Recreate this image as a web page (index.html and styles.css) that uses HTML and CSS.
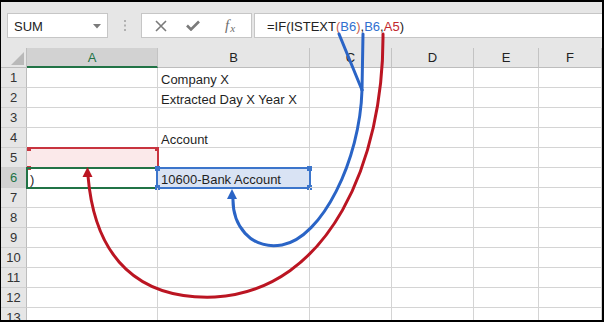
FILE: index.html
```html
<!DOCTYPE html>
<html>
<head>
<meta charset="utf-8">
<link rel="stylesheet" href="styles.css">
</head>
<body>
<div class="frame">
  <div class="toolbar">
    <div class="namebox">
      <span>SUM</span>
      <svg class="caret" width="8" height="5" viewBox="0 0 8 5"><path d="M0 0 H8 L4 4.5 Z" fill="#7a7a7a"/></svg>
    </div>
    <div class="sep">
      <svg width="3" height="11" viewBox="0 0 3 11"><rect x="0" y="0" width="2" height="2" fill="#b0b0b0"/><rect x="0" y="4.5" width="2" height="2" fill="#b0b0b0"/><rect x="0" y="9" width="2" height="2" fill="#b0b0b0"/></svg>
    </div>
    <div class="fbtns">
      <span class="fb fb-x"><svg width="12" height="12" viewBox="0 0 12 12"><path d="M1 1 L11 11 M11 1 L1 11" stroke="#7a7a7a" stroke-width="1.6" fill="none"/></svg></span>
      <span class="fb fb-ok"><svg width="14" height="11" viewBox="0 0 14 11"><path d="M1 5.5 L5 9.5 L13 1.5" stroke="#7a7a7a" stroke-width="2.6" fill="none"/></svg></span>
      <span class="fb fb-fx"><i>f</i><span class="fx-x">x</span></span>
    </div>
    <div class="finput">=IF(ISTEXT<span class="par">(</span><span class="rb">B6</span><span class="par">)</span>,<span class="rb">B6</span>,<span class="rr">A5</span>)</div>
  </div>
  <div class="sheet">
    <div class="corner"><svg width="13" height="13" viewBox="0 0 13 13"><path d="M13 0 V13 H0 Z" fill="#b9b9b9"/></svg></div>
    <div class="ch act">A</div><div class="ch">B</div><div class="ch">C</div><div class="ch">D</div><div class="ch">E</div><div class="ch">F</div>

    <div class="rh">1</div><div class="c"></div><div class="c">Company X</div><div class="c"></div><div class="c"></div><div class="c"></div><div class="c"></div>
    <div class="rh">2</div><div class="c"></div><div class="c">Extracted Day X Year X</div><div class="c"></div><div class="c"></div><div class="c"></div><div class="c"></div>
    <div class="rh">3</div><div class="c"></div><div class="c"></div><div class="c"></div><div class="c"></div><div class="c"></div><div class="c"></div>
    <div class="rh">4</div><div class="c"></div><div class="c">Account</div><div class="c"></div><div class="c"></div><div class="c"></div><div class="c"></div>
    <div class="rh">5</div><div class="c ref-red"><span class="box box-red"><span class="h h-tl"></span><span class="h h-tr"></span><span class="h h-bl"></span><span class="h h-br"></span></span></div><div class="c"></div><div class="c"></div><div class="c"></div><div class="c"></div><div class="c"></div>
    <div class="rh act">6</div><div class="c active">)<span class="box box-green"></span></div><div class="c ref-blue">10600-Bank Account<span class="box box-blue"><span class="h h-tl"></span><span class="h h-tr"></span><span class="h h-bl"></span><span class="h h-br"></span></span></div><div class="c"></div><div class="c"></div><div class="c"></div><div class="c"></div>
    <div class="rh">7</div><div class="c"></div><div class="c"></div><div class="c"></div><div class="c"></div><div class="c"></div><div class="c"></div>
    <div class="rh">8</div><div class="c"></div><div class="c"></div><div class="c"></div><div class="c"></div><div class="c"></div><div class="c"></div>
    <div class="rh">9</div><div class="c"></div><div class="c"></div><div class="c"></div><div class="c"></div><div class="c"></div><div class="c"></div>
    <div class="rh">10</div><div class="c"></div><div class="c"></div><div class="c"></div><div class="c"></div><div class="c"></div><div class="c"></div>
    <div class="rh">11</div><div class="c"></div><div class="c"></div><div class="c"></div><div class="c"></div><div class="c"></div><div class="c"></div>
    <div class="rh">12</div><div class="c"></div><div class="c"></div><div class="c"></div><div class="c"></div><div class="c"></div><div class="c"></div>
    <div class="rh">13</div><div class="c"></div><div class="c"></div><div class="c"></div><div class="c"></div><div class="c"></div><div class="c"></div>
  </div>
  <svg class="arrows" width="604" height="322" viewBox="0 0 604 322">
    <g fill="none" stroke-width="3" stroke-linecap="round">
      <path d="M339 34 L362 90" stroke="#2a64c6"/>
      <path d="M363 34 L362 90" stroke="#2a64c6"/>
      <path d="M362 90 C360 160 322 238 282 245 C250 250 232 225 233 197" stroke="#2a64c6"/>
      <path d="M383 34 C384 160 330 290 215 297 C140 300 95 260 88 176" stroke="#bb1522"/>
    </g>
    <path d="M232 189 L227 199 L237 199 Z" fill="#2a64c6"/>
    <path d="M87.5 167 L82.5 177 L92.5 177 Z" fill="#bb1522"/>
  </svg>
</div>
</body>
</html>
```
FILE: styles.css
```css
* { box-sizing: border-box; }
body { margin: 0; background: #fff; font-family: "Liberation Sans", Arial, sans-serif; }

.frame {
  width: 604px;
  height: 322px;
  border: 2px solid #000;
  border-left-width: 1px;
  position: relative;
  overflow: hidden;
  background: #e6e6e6;
  display: flex;
  flex-direction: column;
}

.toolbar {
  height: 46px;
  flex: none;
  display: flex;
  align-items: flex-start;
  padding: 11px 0 0 6px;
}

.namebox {
  width: 101px;
  height: 25px;
  background: #fff;
  border: 1px solid #c6c6c6;
  display: flex;
  align-items: center;
  justify-content: space-between;
  padding: 1px 6px 0 6px;
  font-size: 13px;
  color: #222;
}
.caret { margin-top: 1px; }

.sep {
  width: 33px;
  height: 25px;
  display: flex;
  align-items: center;
  justify-content: center;
  padding-left: 2px;
}

.fbtns {
  width: 111px;
  height: 25px;
  background: #fff;
  border: 1px solid #c6c6c6;
  display: flex;
  align-items: center;
}
.fb { display: flex; align-items: center; justify-content: center; height: 100%; }
.fb-x { width: 38px; padding-right: 1px; }
.fb-ok { width: 26px; }
.fb-fx {
  width: 44px;
  padding-left: 4px;
  font-family: "Liberation Serif", serif;
  color: #6e6e6e;
  font-size: 15px;
}
.fb-fx i { font-style: italic; }
.fx-x { font-size: 11px; font-style: italic; margin-top: 4px; margin-left: 1px; }

.finput {
  flex: 1;
  height: 25px;
  margin-left: 2px;
  background: #fff;
  border: 1px solid #c6c6c6;
  border-right: 0;
  padding: 2px 0 0 12px;
  display: flex;
  align-items: center;
  font-size: 13px;
  color: #222;
  white-space: pre;
}
.par { color: #c8604e; }
.rb { color: #2f6fcf; }
.rr { color: #c2272d; }

.sheet {
  flex: 1;
  display: grid;
  grid-template-columns: 26px 131px 152px 82px 82px 65px 63px;
  grid-auto-rows: 20px;
  background: #fff;
  font-size: 13px;
}

.corner {
  background: #e6e6e6;
  border-right: 1px solid #bdbdbd;
  border-bottom: 1px solid #bdbdbd;
  display: flex;
  align-items: flex-end;
  justify-content: flex-end;
  padding: 0 2px 2px 0;
}

.ch {
  background: #e6e6e6;
  border-right: 1px solid #c3c3c3;
  border-bottom: 1px solid #bdbdbd;
  display: flex;
  align-items: center;
  justify-content: center;
  line-height: 15px;
  color: #222;
}
.ch.act {
  background: #d2d2d2;
  color: #217346;
  border-bottom: 2px solid #217346;
  padding-top: 1px;
}

.rh {
  background: #e6e6e6;
  border-right: 1px solid #bdbdbd;
  border-bottom: 1px solid #d0d0d0;
  display: flex;
  align-items: center;
  justify-content: center;
  line-height: 15px;
  color: #333;
}
.rh.act { background: #d2d2d2; color: #217346; }

.c {
  position: relative;
  border-right: 1px solid #d4d4d4;
  border-bottom: 1px solid #d4d4d4;
  display: flex;
  align-items: flex-end;
  padding-left: 3px;
  line-height: 15px;
  color: #1f1f1f;
  white-space: nowrap;
}

.ref-red { background: #fbe9ea; }
.ref-blue { background: #d9e3f4; }
.active { padding-left: 3px; }

.box {
  position: absolute;
  left: -1px;
  top: -1px;
  right: -2px;
  bottom: -2px;
  border: 2px solid;
}
.box-red { border-color: #c8343f; border-left: 0; border-bottom: 0; left: 0; bottom: -1px; }
.box-green { border-color: #217346; }
.box-blue { border-color: #3c75cb; left: -2px; }

.h {
  position: absolute;
  width: 4px;
  height: 4px;
}
.box-red .h { background: #c8343f; }
.box-blue .h { background: #3c75cb; width: 5px; height: 5px; }
.h-tl { left: -2px; top: -2px; }
.h-tr { right: -2px; top: -2px; }
.h-bl { left: -2px; bottom: -2px; }
.h-br { right: -2px; bottom: -2px; }
.box-red .h-tl, .box-red .h-bl { left: 0; }
.box-blue .h-tl { left: -3px; top: -3px; }
.box-blue .h-tr { right: -3px; top: -3px; }
.box-blue .h-bl { left: -3px; bottom: -3px; }
.box-blue .h-br { right: -3px; bottom: -3px; }

.arrows {
  position: absolute;
  left: -1px;
  top: -2px;
  pointer-events: none;
}
```
